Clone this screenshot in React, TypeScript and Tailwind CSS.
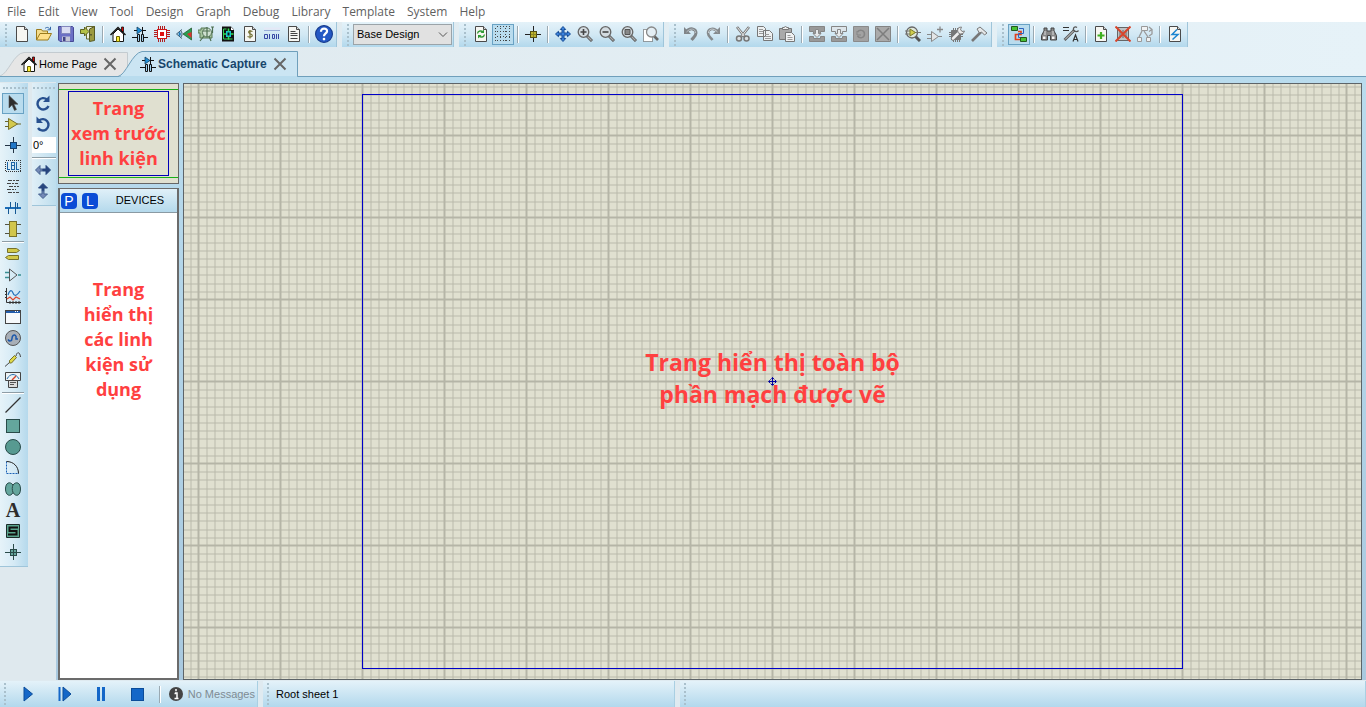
import type { ReactNode } from 'react';
import clsx from 'clsx';

type IconProps = { children: ReactNode; size?: number; crisp?: boolean };

function Icon({ children, size = 16, crisp }: IconProps) {
    return (
        <svg
            width={size}
            height={size}
            viewBox="0 0 16 16"
            fill="none"
            shapeRendering={crisp ? 'crispEdges' : undefined}
            aria-hidden="true"
        >
            {children}
        </svg>
    );
}

const sheet = <path d="M2.500.5h8l3 3v12h-11z" fill="#f6f6f2" stroke="#4a4a4a" />;
const fold = <path d="M10.500.5v3h3" fill="#d8d8d8" stroke="#4a4a4a" />;

const homeGlyph = (
    <Icon>
        <path d="M11.500 1h2v5h-2z" fill="#e00000" stroke="#111" strokeWidth=".8" />
        <path d="M3 8v7.500h10.500V8L8 3z" fill="#fff" stroke="#111" />
        <path d="M.5 9 8 1.500 15.500 9" stroke="#111" strokeWidth="1.400" />
        <path d="M6.500 15.500v-5h3v5z" fill="#ffee33" stroke="#6b6400" />
    </Icon>
);

const schematicGlyph = (
    <Icon>
        <path d="M2 4.500h12M0 11.500h5M11 11.500h5" stroke="#111" />
        <path d="m5 1 5 3.500L5 8z" fill="#1f8fd8" stroke="#15405f" strokeWidth=".8" />
        <path d="M10.500 1v7" stroke="#111" />
        <path d="M5.500 8.500h2v7h-2zM9.500 8.500h2v7h-2z" fill="#9fd0ee" stroke="#111" />
    </Icon>
);

function Lens({ children }: { children?: ReactNode }) {
    return (
        <Icon>
            <path d="m10 10 5 5" stroke="#555" strokeWidth="3" />
            <path d="m10.500 10.500 4 4" stroke="#aaa" strokeWidth="1.200" />
            <circle cx="6.500" cy="6" r="5.300" fill="#d3dbe0" stroke="#666" strokeWidth="1.300" />
            {children}
        </Icon>
    );
}

const grayBar = (top: string) => (
    <Icon>
        <path d="M.5.5h15v5h-4v2h-7v-2h-4z" fill={top} stroke="#858585" />
        <path d="M.5 10.500h4v2h7v-2h4v5H.5z" fill="#999" stroke="#858585" />
        <path d="M6.500 3.500h3v4h2.500L8 11.500 4 7.500h2.500z" fill="#e6e9eb" stroke="#888" />
    </Icon>
);

interface Tool {
    label: string;
    icon: ReactNode;
    active?: boolean;
}

const fileTools: Tool[] = [
    { label: 'New', icon: <Icon>{sheet}{fold}</Icon> },
    {
        label: 'Open',
        icon: (
            <Icon>
                <path d="M.5 14V3.500h5l1 1.500h5v3" fill="#f4dd8c" stroke="#9b7a1c" />
                <path d="m.5 14 3.500-6.500h11.500L12 14z" fill="#ffe08a" stroke="#9b7a1c" />
                <path d="M9 2.500c2-2 4-1 5 1M14.500.8v3h-3" stroke="#3568a8" />
            </Icon>
        ),
    },
    {
        label: 'Save',
        icon: (
            <Icon>
                <path d="M.5.5h14l1 1v14H2l-1.500-1.500z" fill="#6b6fc5" stroke="#474a96" />
                <path d="M3.500.5h9v7h-9z" fill="#d9dcf2" stroke="#8387bd" />
                <path d="M4 10.500h8v5H4z" fill="#c3c5d6" />
                <path d="M5 11h2.500v4H5z" fill="#404385" />
            </Icon>
        ),
    },
    {
        label: 'Exit',
        icon: (
            <Icon>
                <path d="M6.500.5h8V13h-8z" fill="#eef0dd" stroke="#66692f" />
                <path d="M9.500 3 14.500.500v14l-5 1z" fill="#9b9a41" stroke="#555a25" />
                <path d="M11 8v1.500" stroke="#222" />
                <path d="M.5 3.500h4V1l4.500 4.500L4.500 10V7.500h-4z" fill="#b3c046" stroke="#5d6324" />
            </Icon>
        ),
    },
];

const moduleTools: Tool[] = [
    { label: 'Home Page', icon: homeGlyph },
    { label: 'Schematic Capture', icon: schematicGlyph },
    {
        label: 'PCB Layout',
        icon: (
            <Icon crisp>
                <path
                    d="M4.500 0v3M6.500 0v3M8.500 0v3M10.500 0v3M4.500 13v3M6.500 13v3M8.500 13v3M10.500 13v3M0 4.500h3M0 6.500h3M0 8.500h3M0 10.500h3M13 4.500h3M13 6.500h3M13 8.500h3M13 10.500h3"
                    stroke="#b02020"
                />
                <path d="M3.500 3.500h9v9h-9z" fill="#fff" stroke="#d01818" />
                <path d="M6 6h4v4H6z" fill="#e01010" />
            </Icon>
        ),
    },
    {
        label: '3D Visualizer',
        icon: (
            <Icon>
                <path d="M7 8 15.500 2v12z" fill="#28a050" stroke="#2b5c35" strokeWidth=".8" />
                <path d="m11 8 4.500-2v6z" fill="#e03030" />
                <path d="M6 3.500.500 8 6 12.500M4.500 4.500c2 1.500 2 5.500 0 7" stroke="#3a5a70" />
                <path d="M3.500 6c1.800 0 1.800 4 0 4-1.200 0-1.200-4 0-4" fill="#1b78b8" />
            </Icon>
        ),
    },
    {
        label: 'Gerber Viewer',
        icon: (
            <Icon>
                <path d="M3 2h6l1 4 4 1v5H2V7H0V4h3z" fill="#a3c39c" stroke="#5a7a57" />
                <circle cx="9" cy="6.500" r="4.500" fill="#cfe0d0" stroke="#557558" />
                <path d="m6 10-4 5M11 10l2 5M5 5h7M9 1v10M13 1h3M14.500 1v6" stroke="#4e7052" strokeWidth="1.200" />
            </Icon>
        ),
    },
    {
        label: 'Design Explorer',
        icon: (
            <Icon>
                <path d="M2 .5h9l3 3v12H2z" fill="#111" />
                <path d="M11 1v3h3z" fill="#fff" />
                <path d="M3.500 3h3M3.500 3v10h9" stroke="#35d45a" />
                <path d="M6 5h5v6H6z" fill="#16c9d0" />
                <path d="M8.500 2.500v3M8.500 10.500v3M11 8h2.500M3 8h3" stroke="#31e04c" strokeWidth="1.500" />
                <path d="M7.500 6.500h2v3h-2z" fill="#111" />
            </Icon>
        ),
    },
    {
        label: 'Bill of Materials',
        icon: (
            <Icon>
                {sheet}
                {fold}
                <path d="M10.500 5.500c-4-1.500-5 .8-2.500 2.200 4 1.200 2.500 4.500-2.500 2.800M8 4v8.500" stroke="#777438" strokeWidth="1.200" />
            </Icon>
        ),
    },
    {
        label: 'Source Code',
        icon: (
            <Icon>
                <path d="M0 4.500h16" stroke="#98abd8" />
                <path d="M0 2.500h16" stroke="#e4e8f6" strokeWidth="2" />
                <path
                    d="M.5 8.500h3v4h-3zM5.500 8v5M8.500 8.500h2v4h-2zM12.500 8v5M14.500 8v5"
                    stroke="#3847a5"
                />
            </Icon>
        ),
    },
    {
        label: 'Project Notes',
        icon: (
            <Icon>
                {sheet}
                {fold}
                <path d="M4.500 5.500h5M4.500 7.500h7M4.500 9.500h7M4.500 12.500h7" stroke="#444" />
            </Icon>
        ),
    },
];

const helpTools: Tool[] = [
    {
        label: 'Help',
        icon: (
            <Icon size={18}>
                <circle cx="8" cy="8" r="7.500" fill="#2458c4" stroke="#173b8d" />
                <path d="M5.300 6c0-4 5.700-3.600 5.400-.3C10.500 7.600 8 7.500 8 10" stroke="#fff" strokeWidth="2" />
                <circle cx="8" cy="12.500" r="1.200" fill="#fff" />
            </Icon>
        ),
    },
];

const gridDots = [1, 6, 11, 15];

const displayTools: Tool[] = [
    {
        label: 'Redraw',
        icon: (
            <Icon>
                {sheet}
                {fold}
                <path d="M4.500 7.500c.5-3 4-3 5.500-1.500M11.500 8.500c-.5 3-4 3-5.500 1.500" stroke="#2f9a35" strokeWidth="1.400" />
                <path d="M11 3.500v3.500H7.500zM5 12.500V9h3.500z" fill="#2f9a35" />
            </Icon>
        ),
    },
    {
        label: 'Toggle Grid',
        active: true,
        icon: (
            <Icon crisp>
                {gridDots.map((n) => (
                    <path
                        key={n}
                        d={`M0 ${n - 0.5}h16M${n - 0.5} 0v16`}
                        stroke="#444"
                        strokeDasharray="1 2"
                        strokeDashoffset="1"
                    />
                ))}
            </Icon>
        ),
    },
];

const originTools: Tool[] = [
    {
        label: 'False Origin',
        icon: (
            <Icon crisp>
                <path d="M0 8.500h16M8.500 0v16" stroke="#222" />
                <path d="M5.500 5.500h6v6h-6z" fill="#bdb52e" stroke="#555016" />
                <path d="M6 8.500h5M8.500 6v5" stroke="#8f8825" />
            </Icon>
        ),
    },
];

const zoomTools: Tool[] = [
    {
        label: 'Center At Cursor',
        icon: (
            <Icon>
                <path
                    d="M8 .5 10.700 3.500H9v3.500h3.500V5.300L15.500 8l-3 2.700V9H9v3.500h1.700L8 15.500l-2.700-3H7V9H3.500v1.700L.5 8l3-2.700V7H7V3.500H5.300z"
                    fill="#3c83dc"
                    stroke="#164b94"
                />
            </Icon>
        ),
    },
    { label: 'Zoom In', icon: <Lens><path d="M3.500 6h6M6.500 3v6" stroke="#444" strokeWidth="1.600" /></Lens> },
    { label: 'Zoom Out', icon: <Lens><path d="M3.500 6h6" stroke="#444" strokeWidth="1.600" /></Lens> },
    { label: 'Zoom All', icon: <Lens><path d="M4 3.500h5v5H4z" fill="#888" stroke="#555" /></Lens> },
    {
        label: 'Zoom Area',
        icon: (
            <Icon>
                <path d="M.5 3.500h9v12h-9z" fill="#fff" stroke="#444" strokeDasharray="1 1" />
                <path d="m11 10 4 4" stroke="#666" strokeWidth="2.600" />
                <circle cx="8.500" cy="6" r="5" fill="#e4eef4" stroke="#888" strokeWidth="1.300" />
            </Icon>
        ),
    },
];

const undoTools: Tool[] = [
    {
        label: 'Undo',
        icon: (
            <Icon>
                <path d="M3 6c4-5 10-3.500 10 1 0 3-2.500 4.500-4.500 7" stroke="#808589" strokeWidth="3" />
                <path d="M1 1v7h7z" fill="#808589" />
                <path d="M3.500 6c4-4.500 9-3.500 9 1" stroke="#b9c0c4" />
            </Icon>
        ),
    },
    {
        label: 'Redo',
        icon: (
            <Icon>
                <path d="M13 6C9 1 3 2.500 3 7c0 3 2.500 4.500 4.500 7" stroke="#858a8d" strokeWidth="2.600" />
                <path d="M15 1v7H8z" fill="#858a8d" />
                <path d="M12.500 6c-4-4.500-9-3.500-9 1" stroke="#ccd2d5" />
            </Icon>
        ),
    },
];

const clipboardTools: Tool[] = [
    {
        label: 'Cut',
        icon: (
            <Icon>
                <path d="m2 1 8 10M14 1 6 11" stroke="#777" strokeWidth="2.600" />
                <path d="m2.500 1.500 7 9M13.500 1.500l-7 9" stroke="#eee" />
                <circle cx="4" cy="12.500" r="2.500" fill="#d9dfe2" stroke="#777" strokeWidth="1.500" />
                <circle cx="11.500" cy="12.500" r="2.500" fill="#d9dfe2" stroke="#777" strokeWidth="1.500" />
            </Icon>
        ),
    },
    {
        label: 'Copy',
        icon: (
            <Icon>
                <path d="M.5.5h6l2 2v8h-8zM6.500 4.500h6l3 3v7h-9z" fill="#edf0f1" stroke="#777" />
                <path d="M2 3.500h4M2 5.500h4M2 7.500h4M8 8.500h4M8 10.500h6M8 12.500h6" stroke="#999" />
            </Icon>
        ),
    },
    {
        label: 'Paste',
        icon: (
            <Icon>
                <path d="M.5 2.500h12v11H.5z" fill="#aaa" stroke="#777" />
                <path d="M3.500 3.500v-2H5l1.500-1L8 1.500h1.500v2z" fill="#eee" stroke="#777" />
                <path d="M6.500 6.500h6l3 3v6h-9z" fill="#f0f2f3" stroke="#777" />
                <path d="M8.500 9.500h3M8.500 11.500h5M8.500 13.500h5" stroke="#999" />
            </Icon>
        ),
    },
];

const blockTools: Tool[] = [
    { label: 'Block Copy', icon: grayBar('#999') },
    { label: 'Block Move', icon: grayBar('#dde5ea') },
    {
        label: 'Block Rotate',
        icon: (
            <Icon>
                <path d="M.5.5h15v15H.5z" fill="#a2a2a2" stroke="#8a8a8a" />
                <path d="M4.500 6c2-3 7-2 7 2s-5 5-7 2" stroke="#858585" strokeWidth="1.500" />
                <path d="M4 5v4h4" stroke="#858585" />
            </Icon>
        ),
    },
    {
        label: 'Block Delete',
        icon: (
            <Icon>
                <path d="M.5.5h15v15H.5z" fill="#aaa" stroke="#848484" />
                <path d="m2 2 12 12M14 2 2 14" stroke="#7d7d7d" strokeWidth="1.500" />
            </Icon>
        ),
    },
];

const libraryTools: Tool[] = [
    {
        label: 'Pick Parts',
        icon: (
            <Icon>
                <path d="m10.500 10.500 4.500 4.500" stroke="#555" strokeWidth="3" />
                <circle cx="7" cy="6.500" r="5.500" fill="#e0e8db" stroke="#666" strokeWidth="1.300" />
                <path d="M0 5h5M0 8h5M10 6.500h6" stroke="#777" />
                <path d="m5 3 5.500 3.500L5 10z" fill="#d2cf4e" stroke="#7a7a2a" />
            </Icon>
        ),
    },
    {
        label: 'Make Device',
        icon: (
            <Icon>
                <path d="M0 8.500h4M0 12.500h4M11 10.500h4" stroke="#888" />
                <path d="m4.500 5.500 7 5-7 5z" fill="#e3e5e6" stroke="#888" />
                <path d="M10 3.500h6M13 .5v6" stroke="#888" strokeWidth="1.300" />
            </Icon>
        ),
    },
    {
        label: 'Packaging Tool',
        icon: (
            <Icon>
                <path d="M2.500 4.500h9v9h-9z" fill="#777" stroke="#777" />
                <path d="M4.500 2v14M6.500 2v14M8.500 2v14M10.500 2v14M0 6.500h14M0 8.500h14M0 10.500h14" stroke="#777" />
                <path d="m4 12.500 7-7" stroke="#777" strokeWidth="4.500" strokeLinecap="round" />
                <path d="m4 12.500 7.500-7.500" stroke="#eee" strokeWidth="2.500" strokeLinecap="round" />
                <path d="M12.500 1a3.500 3.500 0 1 0 3 4l-2.500.5-1.500-2z" fill="#eee" stroke="#777" strokeWidth=".9" />
            </Icon>
        ),
    },
    {
        label: 'Decompose',
        icon: (
            <Icon>
                <path d="m1 15 9-9" stroke="#777" strokeWidth="2.600" />
                <path d="m6 3 3-2 7 6-2.500 2-3-3-2 1z" fill="#e5e7e8" stroke="#777" />
            </Icon>
        ),
    },
];

const routerTools: Tool[] = [
    {
        label: 'Wire Autorouter',
        active: true,
        icon: (
            <Icon>
                <path d="M7 5.500h3v3H4.500v5H9" stroke="#e2401c" strokeWidth="1.700" />
                <path d="M8 2.500h4.500v5h-5v4H10" stroke="#2d63bd" />
                <path d="M.5.5h6v4h-6zM9.500 11.500h6v4h-6z" fill="#46c235" stroke="#24571d" />
            </Icon>
        ),
    },
];

const searchTools: Tool[] = [
    {
        label: 'Search and Tag',
        icon: (
            <Icon>
                <path d="M3 2h3v3h4V2h3v3l2.500 4.500V14h-6V9.500h-3V14H.5V9.500L3 5z" fill="#888" stroke="#444" />
                <path d="M2 10.500h2.500v2.500H2zM11 10.500h2.500v2.500H11z" fill="#f4f4f4" />
                <path d="M4 5v4M12 5v4" stroke="#ddd" />
            </Icon>
        ),
    },
    {
        label: 'Property Assignment',
        icon: (
            <Icon>
                <path d="M0 1.500h6M0 4.500h6" stroke="#333" />
                <path d="m1.500 14 10-10" stroke="#555" strokeWidth="2.600" />
                <path d="m2 13.500 9-9" stroke="#ddd" />
                <path d="M14 1.500c-2-1.500-4 0-3.500 2.500 1 2 4 2 5 .5" stroke="#555" strokeWidth="1.300" />
                <path d="m10 15.500 2.500-6.500 2.500 6.500M11 13.500h3" stroke="#333" strokeWidth="1.200" />
            </Icon>
        ),
    },
];

const sheetTools: Tool[] = [
    { label: 'New Sheet', icon: <Icon>{sheet}{fold}<path d="M8 6v7M4.500 9.500h7" stroke="#3eaf20" strokeWidth="2.200" /></Icon> },
    {
        label: 'Remove Sheet',
        icon: (
            <Icon>
                <path d="M2.500 1.500h11v13h-11z" fill="#bfc3c5" stroke="#666" />
                <path d="M5 4v8M8 4v8M11 4v8" stroke="#666" />
                <path d="m.5.5 15 15M15.500.5l-15 15" stroke="#d7452c" strokeWidth="2" />
            </Icon>
        ),
    },
    {
        label: 'Goto Sheet',
        icon: (
            <Icon>
                <path d="M4.500.5h6v4h-6zM.5 11.500h4v4h-4zM9.500 11.500h4v4h-4z" fill="#f0f2f3" stroke="#999" />
                <path d="m5 5-3 6M7 5l4 6M12 1l3 2.500-3 2M15 4v4l-3 2" stroke="#999" strokeWidth="1.300" />
            </Icon>
        ),
    },
];

const erTools: Tool[] = [
    { label: 'Electrical Rule Check', icon: <Icon>{sheet}{fold}<path d="M10 3.500 5 8.500h6l-5.500 5" stroke="#1c86d1" strokeWidth="1.500" /></Icon> },
];

const modeTools: Tool[][] = [
    [
        {
            label: 'Selection Mode',
            active: true,
            icon: <Icon><path d="M4 .5v12.500l3-3 2.500 5.500 2-1-2.500-5.300h4z" fill="#2d2d2d" stroke="#555" strokeWidth=".6" /></Icon>,
        },
        {
            label: 'Component Mode',
            icon: (
                <Icon>
                    <path d="M0 5.500h4M0 10.500h4M12 8h4" stroke="#6b672a" />
                    <path d="m3.500 2.500 9 5.500-9 5.500z" fill="#d3c94d" stroke="#77712a" />
                </Icon>
            ),
        },
        {
            label: 'Junction Dot Mode',
            icon: (
                <Icon crisp>
                    <path d="M0 8.500h16M8.500 0v16" stroke="#234" />
                    <path d="M5.500 5.500h6v6h-6z" fill="#2177c7" stroke="#16406e" />
                </Icon>
            ),
        },
        {
            label: 'Wire Label Mode',
            icon: (
                <Icon crisp>
                    <path d="M.5 2.500h15v11H.5z" stroke="#333" strokeDasharray="1 1" />
                    <path d="M2.500 4v7.500H5M6.500 12V4.500H9v3H7M9.500 8v3.500H7M11.500 4v7.500H14" stroke="#1d64a5" />
                </Icon>
            ),
        },
        {
            label: 'Text Script Mode',
            icon: (
                <Icon crisp>
                    <path d="M3 1.500h11M2 4.500h11M4 7.500h10M2 10.500h9M3 13.500h11" stroke="#444" strokeDasharray="4 1 2 1" />
                </Icon>
            ),
        },
        {
            label: 'Buses Mode',
            icon: (
                <Icon crisp>
                    <path d="M0 8h16" stroke="#1c6db8" strokeWidth="2" />
                    <path d="M5.500 2v6M10.500 2v12M3.500 8v6M12.500 3v6" stroke="#155894" />
                </Icon>
            ),
        },
        {
            label: 'Subcircuit Mode',
            icon: (
                <Icon crisp>
                    <path d="M0 3.500h4M0 12.500h4M12 3.500h4M12 12.500h4" stroke="#554" />
                    <path d="M4.500.5h7v15h-7z" fill="#d1c64c" stroke="#77712a" />
                </Icon>
            ),
        },
    ],
    [
        {
            label: 'Terminals Mode',
            icon: (
                <Icon>
                    <path d="M2.500 2.500h9l3 2-3 2h-9zM13.500 9.500h-10l-3 2 3 2h10z" fill="#d1c94a" stroke="#77712a" />
                </Icon>
            ),
        },
        {
            label: 'Device Pins Mode',
            icon: (
                <Icon>
                    <path d="M0 5.500h4M0 10.500h4M13 8h3" stroke="#3a8f92" strokeWidth="1.400" />
                    <path d="m4.500 2 7.500 6-7.500 6z" stroke="#555" />
                </Icon>
            ),
        },
        {
            label: 'Graph Mode',
            icon: (
                <Icon>
                    <path d="M1.500 0v14.500H16M0 3.500h2M0 6.500h2M0 9.500h2M5 13v3M8 13v3M11 13v3M14 13v3" stroke="#333" />
                    <path d="M3 7c2-6 4-5 5-2s3 4 7-2" stroke="#2370b8" strokeWidth="1.200" />
                    <path d="m2 11 3-2 3 3 3-3 4 2" stroke="#dc472d" strokeWidth="1.200" />
                </Icon>
            ),
        },
        {
            label: 'Active Popup Mode',
            icon: (
                <Icon crisp>
                    <path d="M.5 1.500h15v13H.5z" fill="#f6f9fb" stroke="#444" />
                    <path d="M1 2h14v2H1z" fill="#225cab" />
                    <path d="M10.500 2v1M12.500 2v1" stroke="#fff" />
                </Icon>
            ),
        },
        {
            label: 'Generator Mode',
            icon: (
                <Icon>
                    <circle cx="8" cy="8" r="7.500" fill="#a8afb7" stroke="#555" />
                    <path d="M3 9.500c1.500 2.500 4 1.500 4-1s2-5 4-2.500M11 6v3h2" stroke="#1c58aa" strokeWidth="1.500" />
                </Icon>
            ),
        },
        {
            label: 'Probe Mode',
            icon: (
                <Icon>
                    <path d="m0 15.500 5-4.500" stroke="#444" />
                    <path d="m4.500 9.500 5-5 2 2-5 5.500H4.500z" fill="#ddd84a" stroke="#77712a" />
                    <path d="M11 5c1-5 4-4 4.500 1" stroke="#444" />
                </Icon>
            ),
        },
        {
            label: 'Instruments Mode',
            icon: (
                <Icon>
                    <path d="M.5.5h15v8H.5z" fill="#edf2f4" stroke="#444" />
                    <path d="M2 7c3-6 9-6 12 0" stroke="#2870b0" />
                    <path d="m7 8 4-4" stroke="#d54028" strokeWidth="1.500" />
                    <path d="M3.500 8.500h9v7h-9z" fill="#ddd" stroke="#444" />
                    <path d="M5 10.500h6M5 12.500h4" stroke="#555" />
                </Icon>
            ),
        },
    ],
    [
        { label: '2D Line', icon: <Icon><path d="m.5 15.500 15-15" stroke="#333" strokeWidth="1.300" /></Icon> },
        { label: '2D Box', icon: <Icon crisp><path d="M1.500 1.500h13v13h-13z" fill="#64a69d" stroke="#294b49" /></Icon> },
        { label: '2D Circle', icon: <Icon><circle cx="8" cy="8" r="7.500" fill="#579a91" stroke="#294b49" /></Icon> },
        {
            label: '2D Arc',
            icon: (
                <Icon>
                    <path d="M1.500 1.500v12H14" stroke="#1b60b5" strokeDasharray="2 1" />
                    <path d="M1.500 1.500c7 0 12 5 12 12" stroke="#222" />
                </Icon>
            ),
        },
        {
            label: '2D Path',
            icon: (
                <Icon>
                    <path d="M8 4C5 0 .5 1.500.5 8s5 8.500 7.500 3.500c3 5 7.500 3 7.500-3.500S11 0 8 4z" fill="#64a69d" stroke="#294b49" />
                    <path d="M8 4c-1 2-1 5 0 7.500" stroke="#294b49" />
                </Icon>
            ),
        },
        {
            label: '2D Text',
            icon: <span className="font-['Liberation_Serif',serif] text-xl leading-5 font-bold text-[#2d2d2d]">A</span>,
        },
        {
            label: '2D Symbol',
            icon: (
                <Icon>
                    <path d="M1.500 1.500h13v13h-13z" fill="#5aa58e" stroke="#1c2c2a" />
                    <path d="M12 5.500V4.500H4.500V8h7v3.500H4v-1" stroke="#111" strokeWidth="2" />
                </Icon>
            ),
        },
        {
            label: '2D Marker',
            icon: (
                <Icon crisp>
                    <path d="M5.500 5.500h6v6h-6z" fill="#64a69d" stroke="#294b49" />
                    <path d="M0 8.500h16M8.500 0v16" stroke="#294b49" />
                </Icon>
            ),
        },
    ],
];

const menus = ['File', 'Edit', 'View', 'Tool', 'Design', 'Graph', 'Debug', 'Library', 'Template', 'System', 'Help'];

function ToolButton({ label, icon, active }: Tool) {
    return (
        <button
            type="button"
            aria-label={label}
            aria-pressed={active}
            className={clsx(
                'flex h-[21px] w-[22px] shrink-0 items-center justify-center pb-px',
                active && 'bg-[#b9dcee] ring-1 ring-[#69a2c4] ring-inset'
            )}
        >
            {icon}
        </button>
    );
}

function Separator() {
    return (
        <div className="flex w-2 shrink-0 justify-center">
            <div className="h-[17px] w-px bg-[#9aa9b2]" />
            <div className="h-[17px] w-px bg-white" />
        </div>
    );
}

function Grip({ horizontal }: { horizontal?: boolean }) {
    return horizontal ? (
        <div className="mx-px my-1 border-t-2 border-dotted border-[#a9c0cc]" />
    ) : (
        <div className="mr-1 h-[22px] shrink-0 border-l-2 border-dotted border-[#a9c0cc]" />
    );
}

function ToolBand({ groups, children }: { groups?: Tool[][]; children?: ReactNode }) {
    return (
        <div className="flex h-[25px] shrink-0 items-center border-r border-[#9fc5da] bg-linear-to-b from-[#e4f2f9] via-[#d2e8f4] to-[#b2d8ec] pr-px pl-[5px]">
            <Grip />
            {groups?.map((group, i) => (
                <div key={group[0].label} className="flex items-center">
                    {i > 0 && <Separator />}
                    {group.map((tool) => (
                        <ToolButton key={tool.label} {...tool} />
                    ))}
                </div>
            ))}
            {children}
        </div>
    );
}

function CloseButton({ label }: { label: string }) {
    return (
        <button type="button" aria-label={label} className="shrink-0">
            <svg width="14" height="14" viewBox="0 0 14 14" aria-hidden="true">
                <path d="m1.500 1.500 11 11M12.500 1.500l-11 11" stroke="#666" strokeWidth="2" />
            </svg>
        </button>
    );
}

function Tabs() {
    return (
        <nav className="flex h-[29px] items-end border-b border-[#6f9fbb] bg-linear-to-r from-[#dfe9ee] to-[#e6f2f8]">
            <div className="relative flex h-6 w-32 items-center pl-[21px]">
                <svg className="absolute inset-0 h-full w-full" viewBox="0 0 128 24" preserveAspectRatio="none" aria-hidden="true">
                    <path d="M0 24C8 22 14 1 24 .5h103.500V24" fill="#e6e6e6" stroke="#c3cbd0" />
                </svg>
                <a href="#home" className="relative flex items-center gap-[2px] text-[11px] text-black">
                    {homeGlyph}
                    Home Page
                </a>
                <div className="relative ml-auto flex pr-[11px]">
                    <CloseButton label="Close Home Page" />
                </div>
            </div>
            <div className="relative -mb-px -ml-[10px] flex h-[26px] w-[180px] items-center pl-[22px]">
                <svg className="absolute inset-0 h-full w-full" viewBox="0 0 180 26" preserveAspectRatio="none" aria-hidden="true">
                    <path d="M0 25.500C8 24 14 2 24 .5h155.500v25" fill="#cbe5f3" stroke="#6f9fbb" />
                    <path d="M3 25.500h176" stroke="#b9dcee" />
                </svg>
                <a href="#schematic" className="relative flex items-center gap-[2px] text-xs font-bold whitespace-nowrap text-[#17456b]">
                    {schematicGlyph}
                    Schematic Capture
                </a>
                <div className="relative ml-auto flex pr-[11px]">
                    <CloseButton label="Close Schematic Capture" />
                </div>
            </div>
        </nav>
    );
}

function ModeBar() {
    return (
        <div className="w-7 shrink-0 self-start border-b border-[#9fc5da] bg-linear-to-r from-[#e6f3f9] via-[#d5eaf5] to-[#b5d9ec] pb-[3px] pl-[2px]">
            <Grip horizontal />
            {modeTools.map((group, i) => (
                <div key={group[0].label}>
                    {i > 0 && <div className="mt-px mr-1 mb-px border-b border-b-white bg-[#8e9da6] pt-px" />}
                    {group.map((tool) => (
                        <ToolButton key={tool.label} {...tool} />
                    ))}
                </div>
            ))}
        </div>
    );
}

function RotateBar() {
    return (
        <div className="ml-1 flex w-6 shrink-0 flex-col self-start border-b border-[#9fc5da] bg-linear-to-r from-[#e0eff7] to-[#bddded] pb-[3px]">
            <Grip horizontal />
            <ToolButton
                label="Rotate Clockwise"
                icon={
                    <Icon>
                        <path d="M12 4.500A5.700 5.700 0 1 0 13.500 11" stroke="#27508f" strokeWidth="2.400" />
                        <path d="M14.500.5v6.500H8z" fill="#27508f" />
                    </Icon>
                }
            />
            <ToolButton
                label="Rotate Anti-clockwise"
                icon={
                    <Icon>
                        <path d="M4 4.500A5.700 5.700 0 1 1 3 12" stroke="#27508f" strokeWidth="2.400" />
                        <path d="M1.500.5v6.500H8z" fill="#27508f" />
                    </Icon>
                }
            />
            <input
                type="text"
                aria-label="Rotation angle"
                defaultValue="0°"
                className="mt-[2px] h-4 w-6 bg-white pl-px text-[11px] text-black"
            />
            <div className="mt-1 mb-px border-b border-b-white bg-[#8e9da6] pt-px" />
            <ToolButton
                label="X-Mirror"
                icon={
                    <Icon>
                        <path d="M.5 8 5 3.500V7h3v2H5v3.500z" fill="#7489b6" stroke="#45608f" />
                        <path d="M15.500 8 11 3.500V7H8v2h3v3.500z" fill="#26457e" stroke="#26457e" />
                    </Icon>
                }
            />
            <ToolButton
                label="Y-Mirror"
                icon={
                    <Icon>
                        <path d="M8 .5 3.500 5H7v3h2V5h3.500z" fill="#26457e" stroke="#26457e" />
                        <path d="M8 15.500 3.500 11H7V8h2v3h3.500z" fill="#7489b6" stroke="#45608f" />
                    </Icon>
                }
            />
        </div>
    );
}

function SidePanel() {
    return (
        <aside className="ml-[2px] flex w-[121px] shrink-0 flex-col gap-1">
            <div className="border border-[#666] bg-[#e0e0d0] py-[5px]">
                <div className="border-y border-[#18b018] px-[9px] py-px">
                    <p className="border border-[#0000b8] py-1 text-center font-['Open_Sans','Noto_Sans',sans-serif] text-lg leading-[25px] font-bold whitespace-nowrap text-[#ff4040]">
                        Trang
                        <br />
                        xem trước
                        <br />
                        linh kiện
                    </p>
                </div>
            </div>
            <section className="flex min-h-0 flex-1 flex-col border-x-2 border-t border-b-2 border-[#6b6b6b] bg-white">
                <header className="flex h-6 shrink-0 items-center gap-[5px] border-b border-[#8a9aa3] bg-linear-to-b from-[#e0f0f8] to-[#b4d9ec] pl-px">
                    <button type="button" aria-label="Pick Devices" className="h-4 w-4 rounded-sm bg-[#0a4cd6] text-sm leading-4 text-white">
                        P
                    </button>
                    <button type="button" aria-label="Library Manager" className="h-4 w-4 rounded-sm bg-[#0a4cd6] text-sm leading-4 text-white">
                        L
                    </button>
                    <h2 className="flex-1 text-center text-[11px] text-black">DEVICES</h2>
                </header>
                <p className="px-5 pt-16 text-center font-['Open_Sans','Noto_Sans',sans-serif] text-lg leading-[25px] font-bold text-[#ff4040]">
                    Trang hiển thị các linh kiện sử dụng
                </p>
            </section>
        </aside>
    );
}

const minorLines = [8, 16, 25, 33, 41, 49, 57, 66, 74];

function Canvas() {
    return (
        <main className="relative ml-1 flex min-w-0 flex-1 items-center justify-center overflow-hidden border border-[#5d6468] bg-[#e0e0d0]">
            <svg className="absolute inset-0 h-full w-full" shapeRendering="crispEdges" aria-hidden="true">
                <defs>
                    <pattern id="grid" width="82" height="82" patternUnits="userSpaceOnUse">
                        {minorLines.map((n) => (
                            <path key={n} d={`M${n} 0h1v82h-1zM0 ${n}h82v1H0z`} fill="#b9b9ab" />
                        ))}
                        <path d="M0 0h1v82H0zM81 0h1v82h-1zM0 0h82v1H0zM0 81h82v1H0z" fill="#b5b5a7" />
                    </pattern>
                </defs>
                <svg x="50%" y="50%" overflow="visible">
                    <rect x="-1640" y="-1640" width="3280" height="3280" fill="url(#grid)" />
                    <rect x="-410" y="-287" width="820" height="574" fill="none" stroke="#0000c8" />
                    <g shapeRendering="auto" stroke="#0000a0" fill="none">
                        <path d="M-4 0h8M0-4v8" />
                        <path d="m0-4 4 4-4 4-4-4z" strokeDasharray="2 1" />
                    </g>
                </svg>
            </svg>
            <p className="relative pb-2 text-center font-['Open_Sans','Noto_Sans',sans-serif] text-[23px] leading-8 font-bold text-[#ff4040]">
                Trang hiển thị toàn bộ
                <br />
                phần mạch được vẽ
            </p>
        </main>
    );
}

function StatusBar() {
    const band = 'flex h-full items-center border-r border-[#a9cfe2] bg-linear-to-b from-[#e4f2f9] to-[#b2d8ec] pl-1';
    return (
        <footer className="flex h-[27px] shrink-0 gap-[5px] bg-[#dfeaf0] pt-px text-[11px]">
            <div className={clsx(band, 'w-[258px]')}>
                <Grip />
                <div className="flex flex-1 items-center justify-around">
                    <button type="button" aria-label="Run the simulation">
                        <Icon><path d="m4 1 8.500 7L4 15z" fill="#1467c8" stroke="#0b4c99" /></Icon>
                    </button>
                    <button type="button" aria-label="Advance by one step">
                        <Icon>
                            <path d="M2.500 1v14" stroke="#1467c8" strokeWidth="2" />
                            <path d="m6 1 8 7-8 7z" fill="#1467c8" stroke="#0b4c99" />
                        </Icon>
                    </button>
                    <button type="button" aria-label="Pause the simulation">
                        <Icon crisp><path d="M4 1h3v14H4zM9 1h3v14H9z" fill="#1467c8" /></Icon>
                    </button>
                    <button type="button" aria-label="Stop the simulation">
                        <Icon crisp><path d="M2 2h12v12H2z" fill="#1467c8" stroke="#0b4c99" /></Icon>
                    </button>
                </div>
                <Separator />
                <div className="flex items-center gap-1 pr-[2px] pl-1 text-[#7e8b93]">
                    <Icon>
                        <circle cx="8" cy="8" r="7" fill="#444" />
                        <path d="M7 7h2v5M6.500 12.500h4M6.500 7.500H8M8 3v2.200" stroke="#fff" strokeWidth="1.500" />
                    </Icon>
                    <span className="whitespace-nowrap">No Messages</span>
                </div>
            </div>
            <div className={clsx(band, 'w-[412px] text-black')}>
                <Grip />
                <span className="pl-[3px]">Root sheet 1</span>
            </div>
            <div className={clsx(band, 'flex-1')}>
                <Grip />
            </div>
        </footer>
    );
}

export default function App() {
    return (
        <div className="flex h-screen flex-col overflow-hidden bg-[#dfe9ee] font-['Liberation_Sans',Arial,sans-serif]">
            <nav className="flex h-[22px] shrink-0 items-center gap-3 bg-white pt-px pl-[7px] font-['Open_Sans','Noto_Sans',sans-serif] text-xs text-[#5f5f5f]">
                {menus.map((m) => (
                    <button key={m} type="button">
                        {m}
                    </button>
                ))}
            </nav>

            <div className="flex h-[26px] shrink-0 items-start gap-[5px] bg-linear-to-r from-[#dfe9ee] to-[#e6f2f8]">
                <ToolBand groups={[fileTools, moduleTools, helpTools]} />
                <ToolBand>
                    <div className="relative">
                        <select
                            aria-label="Design variant"
                            className="block h-[21px] w-[99px] appearance-none border border-[#9ba3a8] bg-[#e1e1e1] pl-[3px] text-[11px] text-black"
                        >
                            <option>Base Design</option>
                        </select>
                        <svg className="pointer-events-none absolute top-2 right-1 h-[6px] w-[10px]" viewBox="0 0 10 6" aria-hidden="true">
                            <path d="m1 .5 4 4 4-4" fill="none" stroke="#555" />
                        </svg>
                    </div>
                </ToolBand>
                <ToolBand groups={[displayTools, originTools, zoomTools]} />
                <ToolBand groups={[undoTools, clipboardTools, blockTools, libraryTools]} />
                <ToolBand groups={[routerTools, searchTools, sheetTools, erTools]} />
            </div>

            <Tabs />

            <div className="flex min-h-0 flex-1 bg-linear-to-b from-[#b9dcee] to-[#a9c9df] pt-[6px] pr-1">
                <div className="-mt-px flex shrink-0 bg-[#dfe9ee] pt-px">
                    <ModeBar />
                    <RotateBar />
                </div>
                <SidePanel />
                <Canvas />
            </div>

            <StatusBar />
        </div>
    );
}
